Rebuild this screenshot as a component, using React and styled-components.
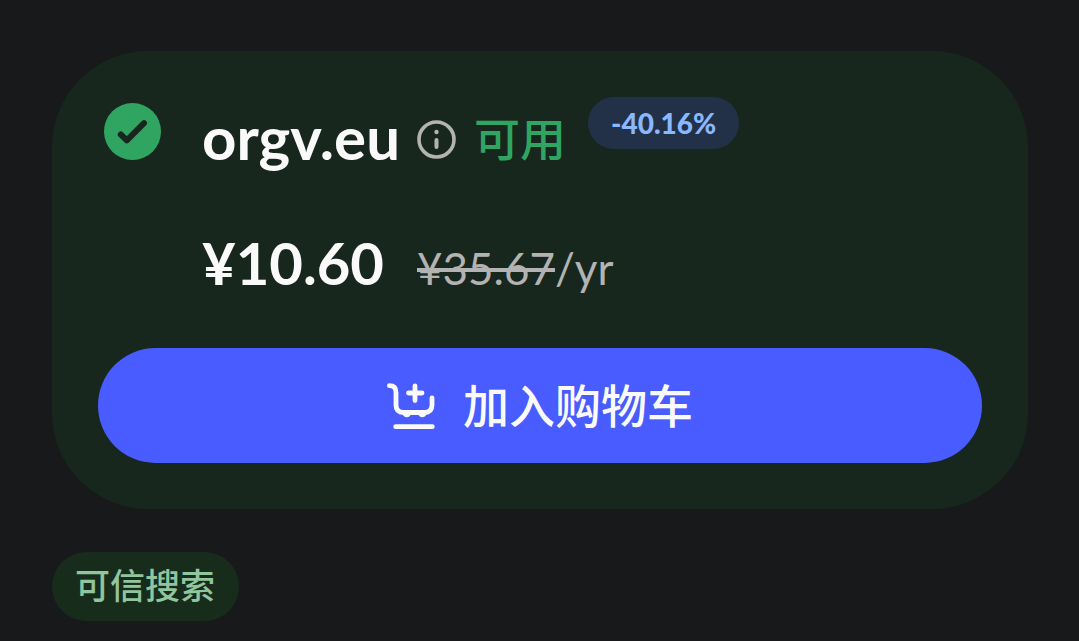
import React from "react";
import styled, { createGlobalStyle } from "styled-components";

const GlobalStyle = createGlobalStyle`
  * {
    box-sizing: border-box;
  }

  body {
    margin: 0;
    background: #18191b;
    color: #fafafa;
    font-family: Lato, 'Noto Sans CJK SC', sans-serif;
  }
`;

const Page = styled.main`
  display: flex;
  flex-direction: column;
  align-items: flex-start;
  gap: 43px;
  padding: 51px 51px 20px 52px;
`;

const Card = styled.section`
  display: flex;
  flex-direction: column;
  gap: 46px;
  width: 100%;
  padding: 46px;
  border-radius: 96px;
  background: #18271d;
`;

const Summary = styled.div`
  display: flex;
  gap: 40px;
`;

const StatusIcon = styled.svg`
  flex: none;
  width: 58px;
  height: 58px;
  margin: 6px 0 0 6px;
`;

const Details = styled.div`
  display: flex;
  flex-direction: column;
  gap: 46px;
`;

const DomainRow = styled.div`
  display: flex;
  align-items: flex-start;
  height: 84px;
  line-height: 80px;
`;

const Domain = styled.h1`
  margin: 0;
  font-size: 60px;
  font-weight: 700;
`;

const InfoButton = styled.button`
  display: flex;
  align-items: center;
  height: 84px;
  margin: 0 18px 0 17px;
  padding: 0;
  border: 0;
  background: none;
  color: #b3b3b3;
`;

const Availability = styled.span`
  color: #30a562;
  font-size: 46px;
  font-weight: 500;
  font-family: 'Noto Sans CJK SC', sans-serif;
  line-height: 78px;
`;

const Discount = styled.span`
  margin-left: 22px;
  padding: 0 23px;
  border-radius: 26px;
  background: #233148;
  color: #8ab8ff;
  font-size: 28px;
  font-weight: 900;
  line-height: 52px;
`;

const PriceRow = styled.div`
  display: flex;
  align-items: baseline;
  gap: 33px;
  height: 75px;
  line-height: 72px;
`;

const Price = styled.strong`
  font-size: 58px;
  font-weight: 700;
`;

const OldPrice = styled.span`
  color: #b3b3b3;
  font-size: 44px;
`;

const CartButton = styled.button`
  display: flex;
  align-items: center;
  justify-content: center;
  gap: 24px;
  width: 100%;
  height: 115px;
  padding: 0;
  border: 0;
  border-radius: 58px;
  background: #485cff;
  color: #fafafa;
  font-family: 'Noto Sans CJK SC', sans-serif;
  font-size: 46px;
  font-weight: 500;
`;

const CartLabel = styled.span`
  padding-bottom: 6px;
`;

const Tag = styled.span`
  padding: 0 24px 6px 23px;
  border-radius: 35px;
  background: #172c1b;
  color: #90c59d;
  font-family: 'Noto Sans CJK SC', sans-serif;
  font-size: 35px;
  font-weight: 500;
  line-height: 63px;
`;

function CheckIcon() {
  return (
    <StatusIcon viewBox="0 0 58 58" aria-hidden="true">
      <circle cx="28.5" cy="28.5" r="28.5" fill="#30a562" />
      <path
        d="M16.8 31.5l6 5.8L40 20.2"
        fill="none"
        stroke="#18271d"
        strokeWidth="6"
        strokeLinecap="round"
        strokeLinejoin="round"
      />
    </StatusIcon>
  );
}

function InfoIcon() {
  return (
    <svg width="39" height="39" viewBox="0 0 39 39" aria-hidden="true">
      <circle cx="19.5" cy="19.5" r="17.5" fill="none" stroke="currentColor" strokeWidth="3.6" />
      <path d="M19.5 20v7" stroke="currentColor" strokeWidth="4" strokeLinecap="round" />
      <circle cx="19.5" cy="12" r="2.2" fill="currentColor" />
    </svg>
  );
}

function CartIcon() {
  return (
    <svg
      width="52"
      height="52"
      viewBox="0 0 52 52"
      fill="none"
      stroke="currentColor"
      strokeWidth="4.8"
      strokeLinecap="round"
      strokeLinejoin="round"
      aria-hidden="true"
    >
      <path d="M2.4 5.7C7 5.7 9 8 9 12.5V25C9 30 11.5 32.500 16.5 32.500H37.500C42.500 32.500 45 30 45 25V18" />
      <path d="M28 6v14.5M21.5 13h13.5" />
      <path d="M8.7 46.7h36.600" />
      <path d="M15.5 33a4.3 4.3 0 0 0 8.6 0zM31 33a4.3 4.3 0 0 0 8.6 0z" fill="currentColor" stroke="none" />
    </svg>
  );
}

class App extends React.Component {
  render() {
    return (
      <>
        <GlobalStyle />
        <Page>
          <Card>
            <Summary>
              <CheckIcon />
              <Details>
                <DomainRow>
                  <Domain>orgv.eu</Domain>
                  <InfoButton type="button" aria-label="orgv.eu">
                    <InfoIcon />
                  </InfoButton>
                  <Availability>可用</Availability>
                  <Discount>-40.16%</Discount>
                </DomainRow>
                <PriceRow>
                  <Price>¥10.60</Price>
                  <OldPrice>
                    <s>¥35.67</s>/yr
                  </OldPrice>
                </PriceRow>
              </Details>
            </Summary>
            <CartButton type="button">
              <CartIcon />
              <CartLabel>加入购物车</CartLabel>
            </CartButton>
          </Card>
          <Tag>可信搜索</Tag>
        </Page>
      </>
    );
  }
}

export default App;
